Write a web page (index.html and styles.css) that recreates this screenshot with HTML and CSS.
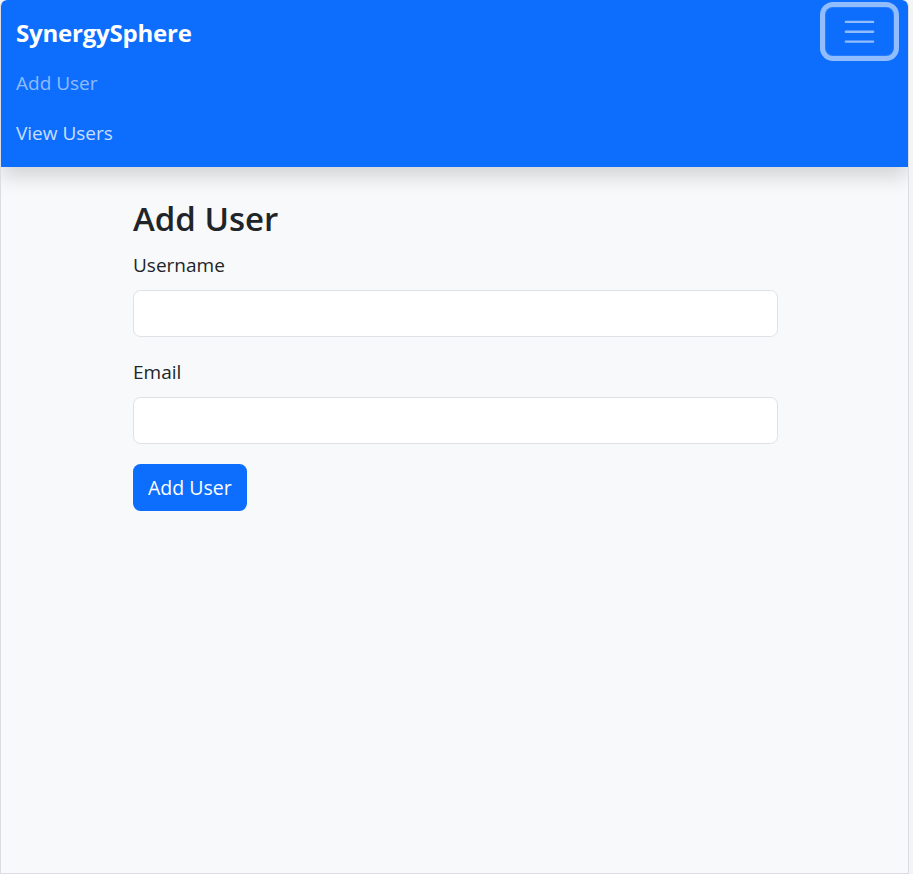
FILE: index.html
```html
<!DOCTYPE html>
<html lang="en">
<head>
<meta charset="utf-8">
<title>SynergySphere - Add User</title>
<link rel="stylesheet" href="styles.css">
</head>
<body>
<div class="app">
  <nav class="navbar">
    <a class="brand" href="#">SynergySphere</a>
    <button class="toggler" type="button" aria-label="Toggle navigation">
      <svg class="toggler-icon" viewBox="0 0 30 30" width="37.5" height="37.5" aria-hidden="true">
        <path d="M4 7h22M4 15h22M4 23h22" stroke="rgba(255,255,255,0.55)" stroke-width="2" stroke-linecap="round" fill="none"/>
      </svg>
    </button>
    <ul class="nav">
      <li><a class="nav-link" href="#">Add User</a></li>
      <li><a class="nav-link nav-link-hover" href="#">View Users</a></li>
    </ul>
  </nav>
  <main class="container">
    <h2 class="title">Add User</h2>
    <form class="form">
      <div class="field">
        <label class="label" for="username">Username</label>
        <input class="input" id="username" type="text">
      </div>
      <div class="field">
        <label class="label" for="email">Email</label>
        <input class="input" id="email" type="email">
      </div>
      <button class="btn" type="button">Add User</button>
    </form>
  </main>
</div>
</body>
</html>
```
FILE: styles.css
```css
* { box-sizing: border-box; }
html, body {
  margin: 0;
  padding: 0;
  background: #f3f4f5;
}
body {
  font-family: "Open Sans", "Noto Sans", sans-serif;
  font-size: 19px;
  color: #212529;
}
.app {
  width: 909px;
  min-height: 874px;
  background: #f8f9fa;
  border: 1px solid #dcdde0;
  border-top: none;
  border-radius: 6px 6px 0 0;
  overflow: hidden;
}
.navbar {
  position: relative;
  z-index: 1;
  display: flex;
  flex-wrap: wrap;
  align-items: center;
  justify-content: space-between;
  padding: 8px 14px 9px 15px;
  background: #0d6efd;
  border-radius: 6px 6px 0 0;
  box-shadow: 0 10px 20px rgba(0, 0, 0, 0.15);
}
.brand {
  padding: 6px 0;
  line-height: 38px;
  font-size: 24px;
  font-weight: 700;
  color: #fff;
  text-decoration: none;
  letter-spacing: -0.2px;
}
.toggler {
  width: 69px;
  height: 49px;
  margin-top: -3px;
  padding: 5px 15px;
  display: flex;
  align-items: center;
  justify-content: center;
  background: transparent;
  border: 1px solid rgba(255, 255, 255, 0.1);
  border-radius: 8px;
  box-shadow: 0 0 0 5px rgba(255, 255, 255, 0.55);
}
.toggler-icon { display: block; }
.nav {
  flex-basis: 100%;
  list-style: none;
  margin: 0;
  padding: 0;
}
.nav-link {
  display: block;
  padding: 10px 0;
  line-height: 30px;
  color: rgba(255, 255, 255, 0.55);
  text-decoration: none;
}
.nav-link-hover { color: rgba(255, 255, 255, 0.78); }
.container {
  width: 645px;
  margin: 31px auto 0;
  position: relative;
  left: 1px;
}
.title {
  margin: 0 0 10px;
  font-size: 33px;
  line-height: 42px;
  font-weight: 600;
}
.field { margin-bottom: 20px; }
.label {
  display: block;
  margin-bottom: 10px;
  line-height: 30px;
}
.input {
  display: block;
  width: 100%;
  height: 47px;
  background: #fff;
  border: 1px solid #dee2e6;
  border-radius: 7.5px;
  font: inherit;
}
.btn {
  height: 47px;
  padding: 0 15px;
  background: #0d6efd;
  color: #fff;
  border: none;
  border-radius: 7.5px;
  font: inherit;
  font-size: 19.5px;
}
```
